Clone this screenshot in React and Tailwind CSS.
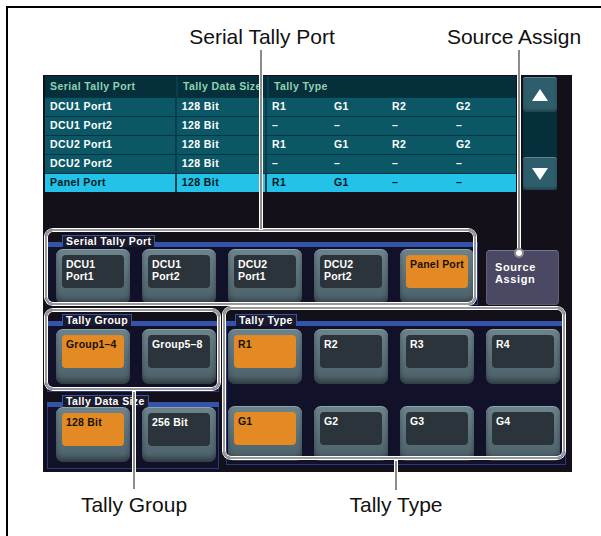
import React from "react";

const rows = [
  ["DCU1 Port1", "128 Bit", ["R1", "G1", "R2", "G2"]],
  ["DCU1 Port2", "128 Bit", ["–", "–", "–", "–"]],
  ["DCU2 Port1", "128 Bit", ["R1", "G1", "R2", "G2"]],
  ["DCU2 Port2", "128 Bit", ["–", "–", "–", "–"]],
  ["Panel Port", "128 Bit", ["R1", "G1", "–", "–"]],
];

const subW = ["w-[62px]", "w-[58px]", "w-[64px]", "w-[60px]"];

function Btn({ label, on }) {
  return (
    <div className="w-[74px] h-[55px] shrink-0 rounded-[7px] bg-gradient-to-b from-[#6d838b] to-[#4a5f67] border-t border-[#8ea3aa] shadow-[inset_0_-4px_5px_rgba(0,0,0,0.35)] px-[6px] pt-[5px]">
      <div
        className={`h-[33px] rounded-[4px] pl-[4px] pt-[3px] text-[10.5px] font-bold leading-[12px] tracking-[0.2px] whitespace-pre ${
          on ? "bg-[#e38a24] text-[#1a1206]" : "bg-[#2b343a] text-white"
        }`}
      >
        {label}
      </div>
    </div>
  );
}

function Group({ title, tab, className, bodyClass, children }) {
  return (
    <div className={`flex flex-col ${className}`}>
      <div className="flex h-[12px] items-end">
        <div className={`${tab} h-[5px] bg-[#3553a8]`} />
        <div className="h-[12px] px-[3px] bg-[#1b1a2c] border border-b-0 border-[#3553a8] text-white text-[10.5px] font-bold leading-[11px] tracking-[0.4px]">
          {title}
        </div>
        <div className="flex-1 h-[5px] bg-[#3553a8]" />
      </div>
      <div className={`flex-1 border-x border-b border-[#283a84] bg-[#11122a] ${bodyClass}`}>{children}</div>
    </div>
  );
}

function Tri({ up }) {
  return (
    <svg width="16" height="12" viewBox="0 0 16 12">
      {up ? <polygon points="8,0 16,12 0,12" fill="#fff" /> : <polygon points="0,0 16,0 8,12" fill="#fff" />}
    </svg>
  );
}

const lineCls = "absolute w-[2px] bg-[#8c8c8c] shadow-[0_0_0_1px_#fff]";
const boxCls = "absolute border-2 border-[#9a9a9a] rounded-[8px] shadow-[0_0_0_1px_#fff,inset_0_0_0_1px_#fff]";

export default function App() {
  return (
    <div className="relative w-[601px] h-[536px] bg-white overflow-hidden font-['Liberation_Sans',Arial,sans-serif]">
      <div className="ml-[6px] mt-[6px] h-[530px] border-l-2 border-t-2 border-black">
        {/* top labels */}
        <div className="flex h-[67px] items-start pt-[17px] text-[21px] leading-[24px] text-[#111]">
          <div className="ml-[139px] w-[230px] text-center">Serial Tally Port</div>
          <div className="ml-[57px] w-[160px] text-center">Source Assign</div>
        </div>

        {/* panel */}
        <div className="ml-[35px] w-[529px] h-[397px] bg-[#141019] px-[2px] pt-[1px] flex flex-col">
          {/* table row */}
          <div className="flex h-[116px]">
            <div className="w-[471px] flex flex-col text-[10.5px] font-bold tracking-[0.4px]">
              <div className="flex h-[21px] items-center bg-[#042f3b] text-[#8fd4b2]">
                <div className="w-[131px] pl-[5px]">Serial Tally Port</div>
                <div className="w-[91px] pl-[5px] h-full flex items-center border-l-2 border-[#06404c] whitespace-nowrap overflow-hidden">Tally Data Size</div>
                <div className="flex-1 pl-[5px] h-full flex items-center border-l-2 border-[#06404c]">Tally Type</div>
              </div>
              {rows.map((r, i) => {
                const hi = i === 4;
                return (
                  <div
                    key={i}
                    className={`flex h-[19px] items-center border-t border-[#053542] ${
                      hi ? "bg-[#22c2e9] text-[#031820]" : "bg-[#0b5766] text-white"
                    }`}
                  >
                    <div className="w-[131px] pl-[5px]">{r[0]}</div>
                    <div className="w-[91px] pl-[5px] h-full flex items-center border-l-2 border-[#06404c]">{r[1]}</div>
                    <div className="flex-1 pl-[5px] h-full flex items-center border-l-2 border-[#06404c]">
                      {r[2].map((t, j) => (
                        <div key={j} className={subW[j]}>
                          {t}
                        </div>
                      ))}
                    </div>
                  </div>
                );
              })}
            </div>
            <div className="ml-[7px] mt-[1px] w-[34px] h-[113px] flex flex-col bg-[#042f3b]">
              <div className="h-[35px] rounded-[3px] bg-[#2e5e6c] border-t border-[#5a8694] shadow-[inset_0_-2px_3px_rgba(0,0,0,0.3)] flex items-center justify-center">
                <Tri up />
              </div>
              <div className="flex-1" />
              <div className="h-[33px] rounded-[3px] bg-[#2e5e6c] border-t border-[#5a8694] shadow-[inset_0_-2px_3px_rgba(0,0,0,0.3)] flex items-center justify-center">
                <Tri />
              </div>
            </div>
          </div>

          {/* serial tally port row */}
          <div className="mt-[43px] flex">
            <Group title="Serial Tally Port" tab="w-[15px]" className="ml-[2px] w-[431px] h-[68px]" bodyClass="pl-[8px] pt-[2px] flex gap-[12px]">
              <Btn label={"DCU1\nPort1"} />
              <Btn label={"DCU1\nPort2"} />
              <Btn label={"DCU2\nPort1"} />
              <Btn label={"DCU2\nPort2"} />
              <Btn label="Panel Port" on />
            </Group>
            <div className="ml-[8px] mt-[15px] w-[73px] h-[55px] rounded-[4px] bg-[#4a4862] border border-[#5e5c78] border-t-[#77759a] px-[8px] pt-[10px] text-white text-[11px] font-bold leading-[12px] tracking-[0.6px]">
              Source
              <br />
              Assign
            </div>
          </div>

          {/* bottom groups */}
          <div className="mt-[9px] flex">
            <div className="ml-[2px] w-[172px] flex flex-col">
              <Group title="Tally Group" tab="w-[15px]" className="h-[78px]" bodyClass="pl-[8px] pt-[3px] flex gap-[12px]">
                <Btn label="Group1–4" on />
                <Btn label="Group5–8" />
              </Group>
              <Group title="Tally Data Size" tab="w-[15px]" className="mt-[3px] h-[74px]" bodyClass="pl-[8px] flex gap-[12px]">
                <Btn label="128 Bit" on />
                <Btn label="256 Bit" />
              </Group>
            </div>
            <Group title="Tally Type" tab="w-[9px]" className="ml-[7px] w-[340px] h-[151px]" bodyClass="pl-[1px] pt-[3px] flex flex-col gap-[22px]">
              <div className="flex gap-[12px]">
                <Btn label="R1" on />
                <Btn label="R2" />
                <Btn label="R3" />
                <Btn label="R4" />
              </div>
              <div className="flex gap-[12px]">
                <Btn label="G1" on />
                <Btn label="G2" />
                <Btn label="G3" />
                <Btn label="G4" />
              </div>
            </Group>
          </div>
        </div>

        {/* bottom labels */}
        <div className="flex pt-[21px] text-[21px] leading-[24px] text-[#111]">
          <div className="ml-[26px] w-[200px] text-center">Tally Group</div>
          <div className="ml-[62px] w-[200px] text-center">Tally Type</div>
        </div>
      </div>

      {/* callout overlays */}
      <div className={`${boxCls} left-[45px] top-[229px] w-[431px] h-[76px]`} />
      <div className={`${boxCls} left-[45px] top-[309px] w-[175px] h-[81px]`} />
      <div className={`${boxCls} left-[223px] top-[307px] w-[342px] h-[152px]`} />
      <div className={`${lineCls} left-[260px] top-[50px] h-[179px]`} />
      <div className={`${lineCls} left-[518px] top-[50px] h-[200px]`} />
      <div className="absolute left-[514px] top-[248px] w-[10px] h-[10px] rounded-full bg-white border-2 border-[#8c8c8c]" />
      <div className={`${lineCls} left-[133px] top-[392px] h-[97px]`} />
      <div className={`${lineCls} left-[395px] top-[461px] h-[29px]`} />
    </div>
  );
}
